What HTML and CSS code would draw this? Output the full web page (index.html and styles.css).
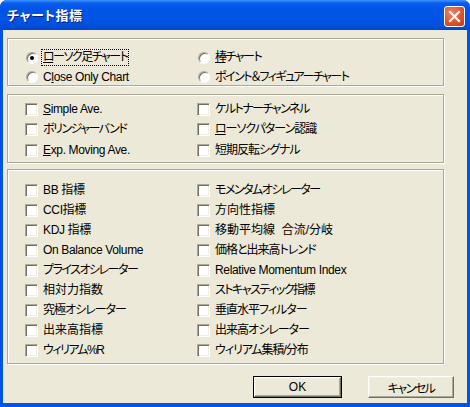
FILE: index.html
```html
<!DOCTYPE html>
<html lang="ja">
<head>
<meta charset="utf-8">
<title>チャート指標</title>
<link rel="stylesheet" href="styles.css">
</head>
<body>
<div class="window">
  <div class="titlebar">
    <span class="title">チャート指標</span>
    <span class="close">
      <svg width="13" height="13" viewBox="0 0 13 13"><path d="M2 2 L11 11 M11 2 L2 11" stroke="#fff" stroke-width="2.2" stroke-linecap="square"/></svg>
    </span>
  </div>
  <div class="client">
    <div class="group g1">
      <label class="item"><span class="radio checked"></span><span class="text focus kana"><u>ロ</u>ーソク足チャート</span></label>
      <label class="item"><span class="radio"></span><span class="text kana"><u>棒</u>チャート</span></label>
      <label class="item"><span class="radio"></span><span class="text">C<u>l</u>ose Only Chart</span></label>
      <label class="item"><span class="radio"></span><span class="text kana">ポイント＆フィギュアーチャート</span></label>
    </div>
    <div class="group g2">
      <label class="item"><span class="check"></span><span class="text"><u>S</u>imple Ave.</span></label>
      <label class="item"><span class="check"></span><span class="text kana">ケルトナーチャンネル</span></label>
      <label class="item"><span class="check"></span><span class="text kana">ボリンジャーバンド</span></label>
      <label class="item"><span class="check"></span><span class="text mixed"><u>ロ</u>ーソクパターン認識</span></label>
      <label class="item"><span class="check"></span><span class="text"><u>E</u>xp. Moving Ave.</span></label>
      <label class="item"><span class="check"></span><span class="text mixed">短期反転シグナル</span></label>
    </div>
    <div class="group g3">
      <label class="item"><span class="check"></span><span class="text">BB 指標</span></label>
      <label class="item"><span class="check"></span><span class="text kana">モメンタムオシレーター</span></label>
      <label class="item"><span class="check"></span><span class="text">CCI指標</span></label>
      <label class="item"><span class="check"></span><span class="text cjk">方向性指標</span></label>
      <label class="item"><span class="check"></span><span class="text">KDJ 指標</span></label>
      <label class="item"><span class="check"></span><span class="text cjk">移動平均線&nbsp;&nbsp;合流/分岐</span></label>
      <label class="item"><span class="check"></span><span class="text">On Balance Volume</span></label>
      <label class="item"><span class="check"></span><span class="text mixed">価格と出来高トレンド</span></label>
      <label class="item"><span class="check"></span><span class="text kana">プライスオシレーター</span></label>
      <label class="item"><span class="check"></span><span class="text">Relative Momentum Index</span></label>
      <label class="item"><span class="check"></span><span class="text cjk">相対力指数</span></label>
      <label class="item"><span class="check"></span><span class="text kana">ストキャスティック指標</span></label>
      <label class="item"><span class="check"></span><span class="text mixed">究極オシレーター</span></label>
      <label class="item"><span class="check"></span><span class="text mixed">垂直水平フィルター</span></label>
      <label class="item"><span class="check"></span><span class="text cjk">出来高指標</span></label>
      <label class="item"><span class="check"></span><span class="text mixed">出来高オシレーター</span></label>
      <label class="item"><span class="check"></span><span class="text kana">ウィリアム%R</span></label>
      <label class="item"><span class="check"></span><span class="text mixed">ウィリアム集積/分布</span></label>
    </div>
    <div class="buttons">
      <span class="btn default"><span class="btn-face">OK</span></span>
      <span class="btn"><span class="btn-face kana">キャンセル</span></span>
    </div>
  </div>
</div>
</body>
</html>
```
FILE: styles.css
```css
html, body {
  margin: 0;
  padding: 0;
  background: #ffffff;
}
body {
  font-family: "Liberation Sans", "Noto Sans CJK JP", sans-serif;
  font-size: 12px;
  color: #000;
  font-feature-settings: "palt";
}
.window {
  width: 470px;
  height: 407px;
  box-sizing: border-box;
  display: flex;
  flex-direction: column;
  background: #0054e3;
  border-radius: 7px 7px 0 0;
  overflow: hidden;
}
.titlebar {
  height: 30px;
  flex: none;
  display: flex;
  align-items: center;
  justify-content: space-between;
  padding: 0 5px 0 7px;
  background: linear-gradient(to bottom, #3d95ff 0, #0a5ded 3px, #0055e8 8px, #0055e5 60%, #0050dc 85%, #0046c8 100%);
}
.title {
  color: #fff;
  font-family: "Noto Sans CJK JP", sans-serif;
  font-weight: bold;
  font-size: 13px;
  letter-spacing: 0.5px;
  text-shadow: 1px 1px 0 #0a1e80;
  margin-top: -1px;
}
.close {
  width: 21px;
  height: 21px;
  box-sizing: border-box;
  border: 1px solid #fff;
  border-radius: 3px;
  background: radial-gradient(circle at 35% 30%, #f0836a 0, #e0532e 55%, #c83a18 100%);
  display: flex;
  align-items: center;
  justify-content: center;
  margin-top: 2px;
}
.client {
  flex: 1;
  margin: 0 3px 4px 3px;
  background: #ece9d8;
  padding: 8px 0 0 4px;
  display: flex;
  flex-direction: column;
}
.group {
  width: 437px;
  box-sizing: border-box;
  border: 1px solid #aca899;
  box-shadow: inset 1px 1px 0 #fff, 1px 1px 0 #fff;
  display: grid;
  grid-template-columns: 172px 1fr;
  padding-left: 17px;
}
.g1 {
  height: 48px;
  padding-top: 9px;
  grid-auto-rows: 19.5px;
}
.g2 {
  height: 69px;
  margin-top: 8px;
  padding-top: 4px;
  grid-auto-rows: 20.5px;
}
.g3 {
  height: 195px;
  margin-top: 6px;
  padding-top: 10px;
  grid-auto-rows: 20px;
}
.item {
  display: flex;
  align-items: center;
  white-space: nowrap;
}
.text {
  margin-left: 4px;
  padding: 1px;
  line-height: 13px;
  letter-spacing: -0.35px;
}
.text.kana,
.btn-face.kana {
  letter-spacing: -1.5px;
}
.text.mixed {
  letter-spacing: -1px;
}
.text.cjk {
  letter-spacing: 0;
}
.text u {
  text-decoration-thickness: 1px;
  text-underline-offset: 1px;
}
.focus {
  outline: 1px dotted #000;
  outline-offset: 0;
}
.check {
  width: 13px;
  height: 13px;
  box-sizing: border-box;
  flex: none;
  background: #fff;
  border: 1px solid;
  border-color: #aca899 #fff #fff #aca899;
  box-shadow: inset 1px 1px 0 #716f64, inset -1px -1px 0 #f1efe2;
}
.radio {
  width: 12px;
  height: 12px;
  box-sizing: border-box;
  flex: none;
  border-radius: 50%;
  background: #fff;
  border: 1px solid;
  border-color: #aca899 #fff #fff #aca899;
  box-shadow: inset 1px 1px 0 #716f64;
  position: relative;
  margin-left: 1px;
}
.radio.checked::after {
  content: "";
  position: absolute;
  left: 3px;
  top: 3px;
  width: 4px;
  height: 4px;
  border-radius: 50%;
  background: #000;
}
.buttons {
  display: flex;
  margin-top: 12px;
  padding-left: 246px;
  gap: 26px;
}
.btn {
  height: 22px;
  box-sizing: border-box;
  display: flex;
}
.btn.default {
  width: 89px;
  border: 1px solid #000;
}
.btn:not(.default) {
  width: 86px;
}
.btn-face {
  flex: 1;
  display: flex;
  align-items: center;
  justify-content: center;
  background: #ece9d8;
  border-top: 1px solid #fff;
  border-left: 1px solid #fff;
  border-right: 1px solid #716f64;
  border-bottom: 1px solid #716f64;
  box-shadow: inset -1px -1px 0 #aca899, inset 1px 1px 0 #f1efe2;
  font-size: 12px;
}
```
